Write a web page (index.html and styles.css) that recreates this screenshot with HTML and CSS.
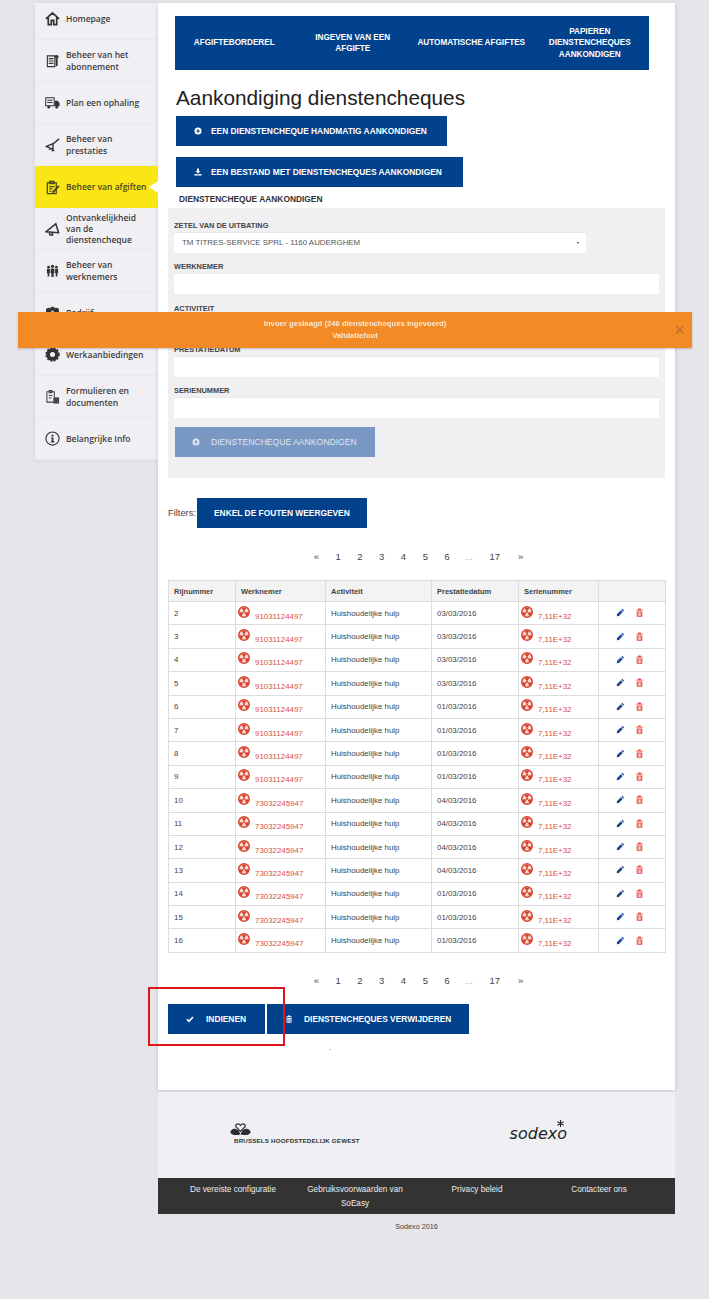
FILE: index.html
```html
<!DOCTYPE html>
<html lang="nl">
<head>
  <meta charset="UTF-8" />
  <title>Aankondiging dienstencheques</title>
  <link rel="stylesheet" href="styles.css">
</head>
<body>
  <svg class="sprites" width="0" height="0">
    <symbol id="i-rad" viewBox="0 0 16 16">
      <circle cx="8" cy="8" r="7" fill="#f6d9d3" stroke="currentColor" stroke-width="2"/>
      <path fill="currentColor" d="M8 7.400 4.800 2.800a6.500 6.500 0 0 1 6.400 0zM7.200 8.800 4.900 13.700a6.500 6.500 0 0 1-3.300-5.500zM8.800 8.800l5.600-.6a6.500 6.500 0 0 1-3.300 5.500z"/>
      <circle cx="8" cy="8" r="1.300" fill="currentColor"/>
    </symbol>
    <symbol id="i-pen" viewBox="0 0 16 16">
      <path fill="currentColor" d="M11.200 1.500 14.500 4.800 13 6.300 9.700 3zM8.700 4 12 7.300 5.200 14.100 1.200 14.800 1.900 10.800z"/>
    </symbol>
    <symbol id="i-trash" viewBox="0 0 16 16">
      <path fill="currentColor" d="M6 1h4l1 2h3v1.500H2V3h3zM3 6h10v8a1.500 1.500 0 0 1-1.500 1.500h-7A1.500 1.500 0 0 1 3 14zm2 1.500V14h1.200V7.500zm2.400 0V14h1.200V7.500zm2.400 0V14H11V7.500z"/>
    </symbol>
    <symbol id="i-plus" viewBox="0 0 16 16">
      <path fill="currentColor" fill-rule="evenodd" d="M8 1a7 7 0 1 1 0 14A7 7 0 0 1 8 1zM6.800 4.500v2.300H4.500v2.400h2.300v2.300h2.400V9.200h2.300V6.800H9.200V4.500z"/>
    </symbol>
  </svg>

  <div class="page">
    <nav class="sidebar">
      <a class="nav-item">
        <svg class="nav-icon" viewBox="0 0 16 16"><path fill="none" stroke="#333" stroke-width="1.800" d="M1 8.500 8 2l7 6.500M3.500 7v7.500h3.200v-4.500h2.600v4.500h3.200V7"/></svg>
        <span>Homepage</span>
      </a>
      <a class="nav-item">
        <svg class="nav-icon" viewBox="0 0 16 16"><path fill="none" stroke="#333" stroke-width="1.200" d="M2.500 3h8v11.500h-8zM4 6h5M4 8.500h5M4 11h5"/><circle cx="12.500" cy="4" r="2" fill="#333"/><path fill="#333" d="M11.500 6h2v8h-2z"/></svg>
        <span>Beheer van het abonnement</span>
      </a>
      <a class="nav-item">
        <svg class="nav-icon" viewBox="0 0 16 16"><path fill="none" stroke="#333" stroke-width="1.100" d="M.8 3h9v8.500h-9zM2.500 5.500h5.500M2.500 8h5.500"/><path fill="#333" d="M10.500 6h3l2 2.500V12h-5z"/><circle cx="4" cy="13" r="1.500" fill="#333"/><circle cx="12.500" cy="13" r="1.500" fill="#333"/></svg>
        <span>Plan een ophaling</span>
      </a>
      <a class="nav-item">
        <svg class="nav-icon" viewBox="0 0 16 16"><path fill="none" stroke="#333" stroke-width="1.500" d="M15 2 8.500 7.500M8.500 7 1.500 10l7 3.500zM4 11l1 2.500M7 14.500h3"/></svg>
        <span>Beheer van prestaties</span>
      </a>
      <a class="nav-item nav-active">
        <svg class="nav-icon" viewBox="0 0 16 16"><path fill="none" stroke="#4a4520" stroke-width="1.300" d="M2.500 3h9.500v11.500H2.500zM5 1.500h4.500V4H5zM4.500 7H10M4.500 9.500H8M4.500 12H7"/><path fill="#4a4520" d="M14 5.500 15.500 7l-6 6.500-2 .5.500-2z"/></svg>
        <span>Beheer van afgiften</span>
      </a>
      <a class="nav-item">
        <svg class="nav-icon" viewBox="0 0 16 16"><path fill="none" stroke="#333" stroke-width="1.600" d="M1 11.500 11.500 3l3 9.500zM4.500 12.500l1 2.500h2.500l-.5-2.500"/></svg>
        <span>Ontvankelijkheid van de dienstencheque</span>
      </a>
      <a class="nav-item">
        <svg class="nav-icon" viewBox="0 0 16 16"><g fill="#333"><circle cx="3.800" cy="4.500" r="1.500"/><circle cx="8" cy="3.500" r="1.700"/><circle cx="12.200" cy="4.500" r="1.500"/><path d="M2 6.500h3.200v4.500h-.6v3.500H2.800V11H2zM6 5.800h4v5.200h-.8v4H6.800v-4H6zM10.800 6.500H14V11h-.8v3.500h-1.800V11h-.6z"/></g></svg>
        <span>Beheer van werknemers</span>
      </a>
      <a class="nav-item">
        <svg class="nav-icon" viewBox="0 0 16 16"><g fill="#333"><circle cx="4" cy="6" r="3"/><circle cx="12" cy="6" r="3"/><path d="M6 2h4v4H6z"/></g></svg>
        <span>Bedrijf</span>
      </a>
      <a class="nav-item">
        <svg class="nav-icon" viewBox="0 0 16 16"><circle cx="8" cy="8" r="4.700" fill="none" stroke="#333" stroke-width="4"/><circle cx="8" cy="8" r="6.800" fill="none" stroke="#333" stroke-width="1.800" stroke-dasharray="2 1.600"/></svg>
        <span>Werkaanbiedingen</span>
      </a>
      <a class="nav-item">
        <svg class="nav-icon" viewBox="0 0 16 16"><path fill="none" stroke="#444" stroke-width="1.100" d="M2 3h8v11H2zM4.500 1.500h3V4h-3zM4 7h4M4 9.500h3"/><path fill="#444" d="M9 9h6v6.500H9z"/></svg>
        <span>Formulieren en documenten</span>
      </a>
      <a class="nav-item">
        <svg class="nav-icon" viewBox="0 0 16 16"><circle cx="8" cy="8" r="7" fill="none" stroke="#333" stroke-width="1.200"/><path fill="#333" d="M7 4h2v1.800H7zM6.500 7h2.500v4h1v1.200H6.200V11h1V8.200h-.7z"/></svg>
        <span>Belangrijke Info</span>
      </a>
    </nav>

    <div class="column">
      <main class="main">
        <div class="tabs">
          <a class="tab">AFGIFTEBORDEREL</a>
          <a class="tab">INGEVEN VAN EEN AFGIFTE</a>
          <a class="tab">AUTOMATISCHE AFGIFTES</a>
          <a class="tab">PAPIEREN DIENSTENCHEQUES AANKONDIGEN</a>
        </div>

        <h1>Aankondiging dienstencheques</h1>

        <div class="actions">
          <button class="btn btn-announce"><svg class="btn-icon"><use href="#i-plus"/></svg>EEN DIENSTENCHEQUE HANDMATIG AANKONDIGEN</button>
          <button class="btn btn-upload">
            <svg class="btn-icon" viewBox="0 0 16 16"><path fill="currentColor" d="M6 1h4v5h3L8 11 3 6h3zM1 12h5l2 1.500 2-1.500h5v3H1z"/></svg>EEN BESTAND MET DIENSTENCHEQUES AANKONDIGEN
          </button>
        </div>

        <h2>DIENSTENCHEQUE AANKONDIGEN</h2>

        <form class="panel">
          <div class="field">
            <label>ZETEL VAN DE UITBATING</label>
            <div class="control control-select">TM TITRES-SERVICE SPRL - 1160 AUDERGHEM<span class="caret"></span></div>
          </div>
          <div class="field">
            <label>WERKNEMER</label>
            <div class="control"></div>
          </div>
          <div class="field">
            <label>ACTIVITEIT</label>
            <div class="control"></div>
          </div>
          <div class="field">
            <label>PRESTATIEDATUM</label>
            <div class="control"></div>
          </div>
          <div class="field">
            <label>SERIENUMMER</label>
            <div class="control"></div>
          </div>
          <button type="button" class="btn btn-disabled"><svg class="btn-icon"><use href="#i-plus"/></svg>DIENSTENCHEQUE AANKONDIGEN</button>
        </form>

        <div class="filters">
          <span>Filters:</span>
          <button class="btn btn-filter">ENKEL DE FOUTEN WEERGEVEN</button>
        </div>

        <div class="pager">
          <span>«</span><span>1</span><span>2</span><span>3</span><span>4</span><span>5</span><span>6</span><span class="dim">...</span><span class="wide">17</span><span>»</span>
        </div>

        <table class="grid">
          <colgroup>
            <col class="c-row"><col class="c-emp"><col class="c-act"><col class="c-date"><col class="c-ser"><col class="c-tools">
          </colgroup>
          <thead>
            <tr><th>Rijnummer</th><th>Werknemer</th><th>Activiteit</th><th>Prestatiedatum</th><th>Serienummer</th><th></th></tr>
          </thead>
          <tbody>
            <tr><td>2</td><td class="err"><svg class="rad"><use href="#i-rad"/></svg>91031124497</td><td>Huishoudelijke hulp</td><td>03/03/2016</td><td class="err"><svg class="rad"><use href="#i-rad"/></svg>7,11E+32</td><td class="tools"><svg class="pen"><use href="#i-pen"/></svg><svg class="bin"><use href="#i-trash"/></svg></td></tr>
            <tr><td>3</td><td class="err"><svg class="rad"><use href="#i-rad"/></svg>91031124497</td><td>Huishoudelijke hulp</td><td>03/03/2016</td><td class="err"><svg class="rad"><use href="#i-rad"/></svg>7,11E+32</td><td class="tools"><svg class="pen"><use href="#i-pen"/></svg><svg class="bin"><use href="#i-trash"/></svg></td></tr>
            <tr><td>4</td><td class="err"><svg class="rad"><use href="#i-rad"/></svg>91031124497</td><td>Huishoudelijke hulp</td><td>03/03/2016</td><td class="err"><svg class="rad"><use href="#i-rad"/></svg>7,11E+32</td><td class="tools"><svg class="pen"><use href="#i-pen"/></svg><svg class="bin"><use href="#i-trash"/></svg></td></tr>
            <tr><td>5</td><td class="err"><svg class="rad"><use href="#i-rad"/></svg>91031124497</td><td>Huishoudelijke hulp</td><td>03/03/2016</td><td class="err"><svg class="rad"><use href="#i-rad"/></svg>7,11E+32</td><td class="tools"><svg class="pen"><use href="#i-pen"/></svg><svg class="bin"><use href="#i-trash"/></svg></td></tr>
            <tr><td>6</td><td class="err"><svg class="rad"><use href="#i-rad"/></svg>91031124497</td><td>Huishoudelijke hulp</td><td>01/03/2016</td><td class="err"><svg class="rad"><use href="#i-rad"/></svg>7,11E+32</td><td class="tools"><svg class="pen"><use href="#i-pen"/></svg><svg class="bin"><use href="#i-trash"/></svg></td></tr>
            <tr><td>7</td><td class="err"><svg class="rad"><use href="#i-rad"/></svg>91031124497</td><td>Huishoudelijke hulp</td><td>01/03/2016</td><td class="err"><svg class="rad"><use href="#i-rad"/></svg>7,11E+32</td><td class="tools"><svg class="pen"><use href="#i-pen"/></svg><svg class="bin"><use href="#i-trash"/></svg></td></tr>
            <tr><td>8</td><td class="err"><svg class="rad"><use href="#i-rad"/></svg>91031124497</td><td>Huishoudelijke hulp</td><td>01/03/2016</td><td class="err"><svg class="rad"><use href="#i-rad"/></svg>7,11E+32</td><td class="tools"><svg class="pen"><use href="#i-pen"/></svg><svg class="bin"><use href="#i-trash"/></svg></td></tr>
            <tr><td>9</td><td class="err"><svg class="rad"><use href="#i-rad"/></svg>91031124497</td><td>Huishoudelijke hulp</td><td>01/03/2016</td><td class="err"><svg class="rad"><use href="#i-rad"/></svg>7,11E+32</td><td class="tools"><svg class="pen"><use href="#i-pen"/></svg><svg class="bin"><use href="#i-trash"/></svg></td></tr>
            <tr><td>10</td><td class="err"><svg class="rad"><use href="#i-rad"/></svg>73032245947</td><td>Huishoudelijke hulp</td><td>04/03/2016</td><td class="err"><svg class="rad"><use href="#i-rad"/></svg>7,11E+32</td><td class="tools"><svg class="pen"><use href="#i-pen"/></svg><svg class="bin"><use href="#i-trash"/></svg></td></tr>
            <tr><td>11</td><td class="err"><svg class="rad"><use href="#i-rad"/></svg>73032245947</td><td>Huishoudelijke hulp</td><td>04/03/2016</td><td class="err"><svg class="rad"><use href="#i-rad"/></svg>7,11E+32</td><td class="tools"><svg class="pen"><use href="#i-pen"/></svg><svg class="bin"><use href="#i-trash"/></svg></td></tr>
            <tr><td>12</td><td class="err"><svg class="rad"><use href="#i-rad"/></svg>73032245947</td><td>Huishoudelijke hulp</td><td>04/03/2016</td><td class="err"><svg class="rad"><use href="#i-rad"/></svg>7,11E+32</td><td class="tools"><svg class="pen"><use href="#i-pen"/></svg><svg class="bin"><use href="#i-trash"/></svg></td></tr>
            <tr><td>13</td><td class="err"><svg class="rad"><use href="#i-rad"/></svg>73032245947</td><td>Huishoudelijke hulp</td><td>04/03/2016</td><td class="err"><svg class="rad"><use href="#i-rad"/></svg>7,11E+32</td><td class="tools"><svg class="pen"><use href="#i-pen"/></svg><svg class="bin"><use href="#i-trash"/></svg></td></tr>
            <tr><td>14</td><td class="err"><svg class="rad"><use href="#i-rad"/></svg>73032245947</td><td>Huishoudelijke hulp</td><td>01/03/2016</td><td class="err"><svg class="rad"><use href="#i-rad"/></svg>7,11E+32</td><td class="tools"><svg class="pen"><use href="#i-pen"/></svg><svg class="bin"><use href="#i-trash"/></svg></td></tr>
            <tr><td>15</td><td class="err"><svg class="rad"><use href="#i-rad"/></svg>73032245947</td><td>Huishoudelijke hulp</td><td>01/03/2016</td><td class="err"><svg class="rad"><use href="#i-rad"/></svg>7,11E+32</td><td class="tools"><svg class="pen"><use href="#i-pen"/></svg><svg class="bin"><use href="#i-trash"/></svg></td></tr>
            <tr><td>16</td><td class="err"><svg class="rad"><use href="#i-rad"/></svg>73032245947</td><td>Huishoudelijke hulp</td><td>01/03/2016</td><td class="err"><svg class="rad"><use href="#i-rad"/></svg>7,11E+32</td><td class="tools"><svg class="pen"><use href="#i-pen"/></svg><svg class="bin"><use href="#i-trash"/></svg></td></tr>
          </tbody>
        </table>

        <div class="pager pager-bottom">
          <span>«</span><span>1</span><span>2</span><span>3</span><span>4</span><span>5</span><span>6</span><span class="dim">...</span><span class="wide">17</span><span>»</span>
        </div>

        <div class="submit-row">
          <button class="btn btn-submit">
            <svg class="btn-icon" viewBox="0 0 16 16"><path fill="none" stroke="currentColor" stroke-width="3.400" d="M2 8.500 6 12.500 14 4"/></svg>INDIENEN
          </button>
          <button class="btn btn-delete"><svg class="btn-icon"><use href="#i-trash"/></svg>DIENSTENCHEQUES VERWIJDEREN</button>
          <div class="highlight"></div>
        </div>
        <div class="stray">.</div>
      </main>

      <div class="logos">
        <div class="logo-region">
          <svg class="swan" viewBox="0 0 22 14"><path fill="#2b2b30" d="M0 10c1-4 5-5 9-2l2 4C6 14 1 13 0 10zM22 10c-1-4-5-5-9-2l-2 4c5 2 10 1 11-2z"/><path fill="none" stroke="#2b2b30" stroke-width="1.300" d="M11 9 6 4c-1-3 3-4 5-1.500C13 0 17 1 16 4z"/></svg>
          <span>BRUSSELS HOOFDSTEDELIJK GEWEST</span>
        </div>
        <div class="logo-sodexo">sodexo<svg class="star" viewBox="0 0 8 8"><path stroke="#222" stroke-width="1.200" d="M4 0v8M.5 2l7 4M7.500 2l-7 4"/></svg></div>
      </div>

      <footer class="links">
        <a>De vereiste configuratie</a>
        <a>Gebruiksvoorwaarden van SoEasy</a>
        <a>Privacy beleid</a>
        <a>Contacteer ons</a>
      </footer>
      <div class="copy">Sodexo 2016</div>
    </div>
  </div>

  <div class="toast">
    <p>Invoer geslaagd (246 dienstencheques ingevoerd)</p>
    <p>Validatiefout</p>
    <span class="toast-close">×</span>
  </div>
</body>
</html>
```

FILE: styles.css
```css
* {
  box-sizing: border-box;
}

body {
  margin: 0;
  background: #e5e5ea;
  font-family: "Liberation Sans", Arial, sans-serif;
  color: #333;
  height: 1299px;
  overflow: hidden;
}

.sprites {
  position: absolute;
}

.page {
  display: flex;
  padding: 3px 0 0 35px;
}

/* menu links */
.sidebar {
  width: 123px;
  height: 457px;
  background: #f0f0f4;
  box-shadow: 0 0 6px rgba(0, 0, 0, 0.08);
  flex-shrink: 0;
}

.nav-item {
  display: flex;
  align-items: center;
  height: 42px;
  padding: 0 8px 0 10px;
  border-bottom: 1px solid #e9e9ed;
  font-family: "Open Sans", sans-serif;
  font-size: 8.5px;
  font-weight: 600;
  line-height: 11.3px;
  color: #3c3c40;
}

.nav-item:first-child {
  height: 37px;
  padding-bottom: 5px;
}

.nav-icon {
  width: 15px;
  height: 15px;
  margin-right: 6px;
  flex-shrink: 0;
}

.nav-active {
  position: relative;
  background: #f9e614;
  color: #4a4520;
  border-bottom: 0;
}

.nav-active::after {
  content: "";
  position: absolute;
  right: 0;
  top: 15px;
  border: 6px solid transparent;
  border-right: 9px solid #fff;
  border-left: 0;
}

.column {
  width: 517px;
  flex-shrink: 0;
}

.main {
  background: #fff;
  height: 1087px;
  padding: 13px 10px 0;
  box-shadow: 0 1px 5px rgba(0, 0, 0, 0.14);
}

.tabs {
  display: grid;
  grid-template-columns: repeat(4, 1fr);
  align-items: center;
  width: 474px;
  height: 54px;
  margin-left: 7px;
  background: #02418c;
}

.tab {
  padding: 0 4px;
  text-align: center;
  color: #fff;
  font-size: 8.2px;
  font-weight: bold;
  line-height: 11.5px;
}

h1 {
  margin: 15px 0 5px 8px;
  font-size: 20.8px;
  font-weight: normal;
  line-height: 26px;
  color: #222;
}

.actions {
  display: flex;
  flex-direction: column;
  align-items: flex-start;
  gap: 11px;
  margin-left: 8px;
}

.btn {
  display: flex;
  align-items: center;
  height: 30px;
  border: 0;
  padding: 0;
  background: #02418c;
  color: #fff;
  font-family: "Liberation Sans", Arial, sans-serif;
  font-size: 8.4px;
  font-weight: bold;
  white-space: nowrap;
}

.btn-icon {
  width: 8px;
  height: 8px;
  margin-right: 9px;
  flex-shrink: 0;
}

.btn-announce {
  width: 271px;
  padding-left: 18px;
}

.btn-upload {
  width: 287px;
  padding-left: 18px;
}

h2 {
  margin: 6px 0 3px 11px;
  font-size: 8.4px;
  font-weight: bold;
  line-height: 12px;
  color: #333;
}

/* formulier */
.panel {
  height: 270px;
  padding: 11px 6px 0;
  background: #f0f0f3;
}

.field {
  height: 41.3px;
}

.field label {
  display: block;
  height: 13px;
  font-size: 7.4px;
  font-weight: bold;
  line-height: 13px;
  color: #444;
}

.control {
  position: relative;
  height: 21px;
  background: #fff;
  border-top: 1px solid #e8e8ea;
  font-size: 7.9px;
  line-height: 19px;
  color: #555;
}

.control-select {
  width: 412px;
  padding-left: 8px;
}

.caret {
  position: absolute;
  right: 7px;
  top: 9px;
  border: 1.5px solid transparent;
  border-top: 2px solid #333;
}

.panel .btn-disabled {
  width: 200px;
  margin-top: 2px;
  margin-left: 1px;
  padding-left: 17px;
  background: #7a98c4;
  color: #dfe7f2;
  font-weight: normal;
  font-size: 8.6px;
}

.btn-disabled .btn-icon {
  margin-right: 11px;
}

.filters {
  display: flex;
  align-items: center;
  gap: 1px;
  margin-top: 20px;
  font-size: 9.3px;
  color: #444;
}

.btn-filter {
  justify-content: center;
  width: 170px;
}

.pager {
  display: flex;
  justify-content: center;
  margin-top: 23px;
  padding-left: 4px;
  font-size: 9.5px;
  line-height: 12px;
  color: #444;
}

.pager span {
  width: 21.8px;
  text-align: center;
}

.pager .wide {
  width: 30px;
}

.pager .dim {
  color: #aaa;
}

/* tabel */
.grid {
  width: 497px;
  margin-top: 17px;
  border-collapse: collapse;
  table-layout: fixed;
  font-size: 7.9px;
  color: #444;
}

.c-row { width: 67px; }
.c-emp { width: 90px; }
.c-act { width: 106px; }
.c-date { width: 87px; }
.c-ser { width: 80px; }
.c-tools { width: 67px; }

.grid th,
.grid td {
  border: 1px solid #dcdcdf;
  padding: 0 5px;
  text-align: left;
  white-space: nowrap;
}

.grid th {
  height: 21px;
  background: #f3f3f4;
  font-size: 7.5px;
  font-weight: bold;
  color: #444;
}

.grid td {
  height: 23.4px;
}

.grid td.err {
  padding: 0 0 0 2px;
  color: #d9503f;
}

.rad {
  width: 12px;
  height: 12px;
  margin-right: 5px;
  vertical-align: 1px;
  color: #d8432f;
}

.grid td.tools {
  padding-left: 17px;
}

.pen,
.bin {
  width: 9px;
  height: 9px;
  vertical-align: -1px;
}

.pen {
  color: #1f4690;
  margin-right: 10px;
}

.bin {
  color: #e2483a;
}

.pager-bottom {
  margin-top: 22px;
}

.submit-row {
  position: relative;
  display: flex;
  gap: 2px;
  margin-top: 17px;
}

.btn-submit {
  width: 97px;
  padding-left: 18px;
}

.btn-submit .btn-icon {
  margin-right: 12px;
}

.btn-delete {
  width: 202px;
  padding-left: 18px;
}

.btn-delete .btn-icon {
  margin-right: 11px;
}

/* rood kader, ligt over de knoppen */
.highlight {
  position: absolute;
  left: -20px;
  top: -17px;
  width: 137px;
  height: 59px;
  border: 2.5px solid #e0141b;
}

.stray {
  margin: 8px 0 0 161px;
  font-size: 9px;
  line-height: 10px;
  color: #777;
}

.logos {
  display: flex;
  align-items: center;
  justify-content: space-between;
  height: 86px;
  margin-top: 2px;
  padding: 0 108px 3px 72px;
  background: #f0f0f4;
}

.logo-region {
  display: flex;
  flex-direction: column;
  align-items: flex-start;
  font-size: 6.2px;
  font-weight: bold;
  letter-spacing: 0.18px;
  color: #333;
}

.swan {
  width: 21px;
  height: 13px;
}

.logo-region span {
  margin-left: 4px;
  margin-top: 1px;
}

.logo-sodexo {
  position: relative;
  font-family: "DejaVu Sans", sans-serif;
  font-size: 16px;
  font-style: italic;
  color: #222;
  line-height: 18px;
}

.star {
  position: absolute;
  right: 3px;
  top: -5px;
  width: 7px;
  height: 7px;
}

.links {
  display: grid;
  grid-template-columns: repeat(4, 122px);
  height: 36px;
  padding: 5px 0 0 14px;
  background: #333;
  color: #eee;
  font-size: 8.2px;
  line-height: 14px;
  text-align: center;
}

.copy {
  margin-top: 8px;
  font-size: 7.2px;
  line-height: 10px;
  text-align: center;
  color: #444;
}

/* melding bovenop de pagina */
.toast {
  position: fixed;
  left: 18px;
  top: 312px;
  width: 674px;
  height: 36px;
  padding-top: 6px;
  background: #f28b25;
  box-shadow: 0 1px 2px rgba(0, 0, 0, 0.2);
  color: #fbe9d5;
  text-align: center;
  font-size: 7.7px;
  line-height: 12px;
  font-weight: bold;
}

.toast p {
  margin: 0;
}

.toast-close {
  position: absolute;
  right: 7px;
  top: 8px;
  font-size: 18px;
  font-weight: normal;
  line-height: 20px;
  color: #b86c2e;
}
```
